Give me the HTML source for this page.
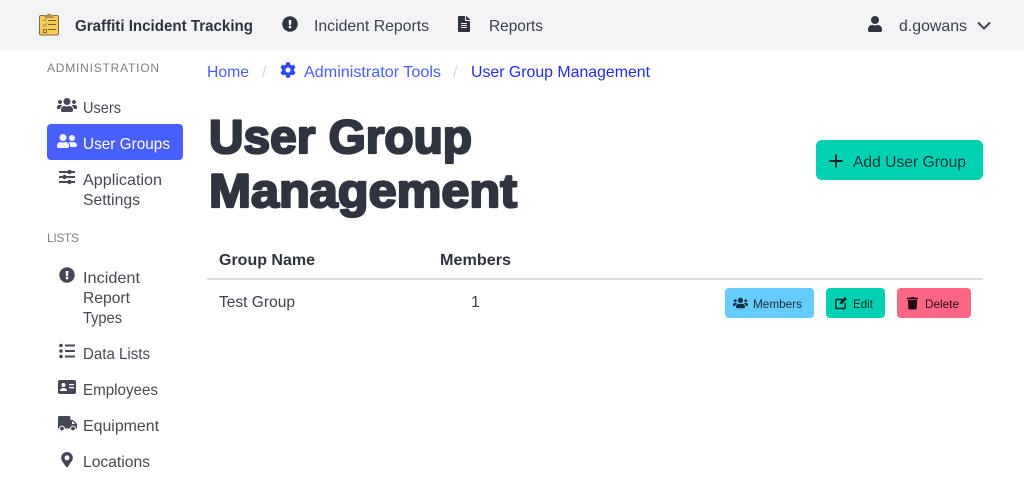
<!DOCTYPE html>
<html lang="en"><head><meta charset="utf-8"><title>User Group Management</title>
<style>
html,body{margin:0;padding:0;background:#fff;width:1024px;height:502px;overflow:hidden}
svg{display:block}
text{font-family:"Liberation Sans",sans-serif;font-size:16px;fill:#454957;white-space:pre}
.n{fill:#3a4050}
.b{font-weight:bold;fill:#2f3440}
.s{font-size:12px;fill:#7d7f85}
.a{fill:#485fff}
.t{font-size:12px;fill:#1e2a30}
</style></head><body>
<svg width="1024" height="502" viewBox="0 0 1024 502" xmlns="http://www.w3.org/2000/svg">
<defs>
<pattern id="d" width="2" height="2" patternUnits="userSpaceOnUse"><rect width="2" height="2" fill="#fafafb"/><rect width="1" height="1" fill="#ebedf0"/><rect x="1" y="1" width="1" height="1" fill="#ebedf0"/></pattern>
<path id="exc" d="M504 256c0 136.997-111.043 248-248 248S8 392.997 8 256C8 119.083 119.043 8 256 8s248 111.083 248 248zm-248 50c-25.405 0-46 20.595-46 46s20.595 46 46 46 46-20.595 46-46-20.595-46-46-46zm-43.673-165.346l7.418 136c.347 6.364 5.609 11.346 11.982 11.346h48.546c6.373 0 11.635-4.982 11.982-11.346l7.418-136c.375-6.874-5.098-12.654-11.982-12.654h-63.383c-6.884 0-12.356 5.78-11.981 12.654z"/>
<path id="usr" d="M96 224c35.300 0 64-28.700 64-64s-28.700-64-64-64-64 28.700-64 64 28.700 64 64 64zm448 0c35.300 0 64-28.700 64-64s-28.700-64-64-64-64 28.700-64 64 28.700 64 64 64zm32 32h-64c-17.600 0-33.500 7.100-45.100 18.600 40.300 22.100 68.900 62 75.100 109.400h66c17.700 0 32-14.300 32-32v-32c0-35.300-28.700-64-64-64zm-256 0c61.900 0 112-50.100 112-112S381.900 32 320 32 208 82.100 208 144s50.100 112 112 112zm76.800 32h-8.300c-20.800 10-43.900 16-68.500 16s-47.600-6-68.500-16h-8.300C179.600 288 128 339.600 128 403.200V432c0 26.500 21.500 48 48 48h288c26.500 0 48-21.500 48-48v-28.800c0-63.600-51.600-115.200-115.200-115.200zm-223.700-13.400C161.500 263.100 145.600 256 128 256H64c-35.300 0-64 28.700-64 64v32c0 17.700 14.300 32 32 32h65.900c6.300-47.400 34.900-87.300 75.200-109.400z"/>
</defs>

<!-- top bar -->
<rect width="1024" height="50" fill="url(#d)"/>
<g>
<rect x="39.500" y="15.500" width="19" height="19.500" rx="1.500" fill="#fdcb57" stroke="#7d6a3c"/>
<path d="M44.500 18v-3h2.300a2.400 2.400 0 0 1 4.400 0h2.300v3z" fill="#b08f4f"/>
<path d="M43 19.500l1.500 1.500 2.500-2.800M43 24.500l1.500 1.500 2.500-2.800" fill="none" stroke="#7fa53f" stroke-width="1"/>
<rect x="43.500" y="29.500" width="3" height="3" fill="none" stroke="#75602f" stroke-width=".9"/>
<path d="M48 20.500h8M48 24.500h8M48 29.500h8" stroke="#75602f" stroke-width=".9"/>
</g>
<text x="75" y="31" class="b" textLength="178" lengthAdjust="spacingAndGlyphs" style="font-size:15.500px">Graffiti Incident Tracking</text>
<svg x="282" y="16" width="16" height="16" viewBox="0 0 512 512" fill="#2f3440"><use href="#exc"/></svg>
<text x="314" y="31" class="n" textLength="115" lengthAdjust="spacingAndGlyphs">Incident Reports</text>
<svg x="458" y="16" width="12" height="16" viewBox="0 0 384 512" fill="#2f3440"><path d="M224 136V0H24C10.700 0 0 10.700 0 24v464c0 13.300 10.700 24 24 24h336c13.300 0 24-10.700 24-24V160H248c-13.200 0-24-10.800-24-24zm64 236c0 6.600-5.400 12-12 12H108c-6.600 0-12-5.400-12-12v-8c0-6.600 5.400-12 12-12h168c6.600 0 12 5.400 12 12v8zm0-64c0 6.600-5.400 12-12 12H108c-6.600 0-12-5.400-12-12v-8c0-6.600 5.400-12 12-12h168c6.600 0 12 5.400 12 12v8zm0-72v8c0 6.600-5.400 12-12 12H108c-6.600 0-12-5.400-12-12v-8c0-6.600 5.400-12 12-12h168c6.600 0 12 5.400 12 12zm96-114.100v6.100H256V0h6.100c6.400 0 12.500 2.500 17 7l97.900 98c4.500 4.500 7 10.600 7 16.900z"/></svg>
<text x="489" y="31" class="n" textLength="54" lengthAdjust="spacingAndGlyphs">Reports</text>
<svg x="868" y="16" width="14" height="16" viewBox="0 0 448 512" fill="#2f3440"><path d="M224 256c70.700 0 128-57.300 128-128S294.700 0 224 0 96 57.300 96 128s57.300 128 128 128zm89.600 32h-16.700c-22.200 10.200-46.900 16-72.900 16s-50.600-5.800-72.900-16h-16.700C60.200 288 0 348.200 0 422.400V464c0 26.500 21.500 48 48 48h352c26.500 0 48-21.500 48-48v-41.600c0-74.200-60.200-134.400-134.400-134.400z"/></svg>
<text x="899" y="31" class="n" textLength="68" lengthAdjust="spacingAndGlyphs">d.gowans</text>
<path d="M978 22.500l6 6 6-6" fill="none" stroke="#3d4354" stroke-width="2"/>

<!-- sidebar -->
<text x="47" y="72" class="s" textLength="112" lengthAdjust="spacing">ADMINISTRATION</text>
<svg x="57" y="97" width="20" height="16" viewBox="0 0 640 512" fill="#454957"><use href="#usr"/></svg>
<text x="83" y="113" textLength="38" lengthAdjust="spacingAndGlyphs">Users</text>
<rect x="47" y="124" width="136" height="36" rx="4" fill="#485fff"/>
<svg x="57" y="133" width="20" height="16" viewBox="0 0 640 512" fill="#f1f3ff"><path d="M192 256c61.900 0 112-50.100 112-112S253.900 32 192 32 80 82.100 80 144s50.100 112 112 112zm76.800 32h-8.300c-20.800 10-43.900 16-68.500 16s-47.600-6-68.500-16h-8.300C51.600 288 0 339.600 0 403.200V432c0 26.500 21.500 48 48 48h288c26.500 0 48-21.500 48-48v-28.800c0-63.600-51.600-115.200-115.200-115.200zM480 256c53 0 96-43 96-96s-43-96-96-96-96 43-96 96 43 96 96 96zm48 32h-3.800c-13.900 4.800-28.600 8-44.200 8s-30.300-3.200-44.200-8H432c-20.400 0-39.200 5.900-55.700 15.400 24.400 26.300 39.700 61.200 39.700 99.800v38.400c0 2.200-.5 4.300-.6 6.400H592c26.500 0 48-21.500 48-48 0-61.900-50.100-112-112-112z"/></svg>
<text x="83" y="149" style="fill:#fff" textLength="87" lengthAdjust="spacingAndGlyphs">User Groups</text>
<g fill="#454957"><rect x="59" y="171" width="16" height="2"/><rect x="59" y="176" width="16" height="2"/><rect x="59" y="181" width="16" height="2"/><circle cx="69.500" cy="172" r="2.200"/><circle cx="64.500" cy="177" r="2.200"/><circle cx="69.500" cy="182" r="2.200"/></g>
<text x="83" y="185" textLength="79" lengthAdjust="spacingAndGlyphs">Application</text>
<text x="83" y="205" textLength="57" lengthAdjust="spacingAndGlyphs">Settings</text>
<text x="47" y="242" class="s" textLength="32" lengthAdjust="spacing">LISTS</text>
<svg x="59" y="267" width="16" height="16" viewBox="0 0 512 512" fill="#454957"><use href="#exc"/></svg>
<text x="83" y="283" textLength="57" lengthAdjust="spacingAndGlyphs">Incident</text>
<text x="83" y="303" textLength="47" lengthAdjust="spacingAndGlyphs">Report</text>
<text x="83" y="323" textLength="39" lengthAdjust="spacingAndGlyphs">Types</text>
<g fill="#454957"><circle cx="61" cy="345.500" r="1.800"/><circle cx="61" cy="351" r="1.800"/><circle cx="61" cy="356.500" r="1.800"/><rect x="65" y="344.500" width="10" height="2" rx=".5"/><rect x="65" y="350" width="10" height="2" rx=".5"/><rect x="65" y="355.500" width="10" height="2" rx=".5"/></g>
<text x="83" y="359" textLength="67" lengthAdjust="spacingAndGlyphs">Data Lists</text>
<rect x="58" y="380" width="18" height="14" rx="2" fill="#454957"/>
<circle cx="63.500" cy="385" r="2" fill="#fff"/><path d="M60 391c0-4 7-4 7 0z" fill="#fff"/><rect x="69" y="384" width="5" height="1.300" fill="#fff"/><rect x="69" y="387" width="5" height="1.300" fill="#fff"/>
<text x="83" y="395" textLength="75" lengthAdjust="spacingAndGlyphs">Employees</text>
<path d="M58 417.500a1.500 1.500 0 0 1 1.500-1.500H69a1.500 1.500 0 0 1 1.500 1.500V420H73l4 4v4.500H58z" fill="#454957"/>
<circle cx="62" cy="428.500" r="2.400" fill="#454957" stroke="#fff"/><circle cx="73" cy="428.500" r="2.400" fill="#454957" stroke="#fff"/><path d="M72 421.500h1l2 2.500h-3z" fill="#fff"/>
<text x="83" y="431" textLength="76" lengthAdjust="spacingAndGlyphs">Equipment</text>
<svg x="61" y="452" width="12" height="15.500" viewBox="0 0 384 512" fill="#454957"><path d="M172.268 501.670C26.970 291.031 0 268.413 0 192 0 85.961 85.961 0 192 0s192 85.961 192 192c0 76.413-26.970 99.031-172.268 309.670-9.535 13.774-29.930 13.773-39.464 0zM192 272c44.183 0 80-35.817 80-80s-35.817-80-80-80-80 35.817-80 80 35.817 80 80 80z"/></svg>
<text x="83" y="467" textLength="67" lengthAdjust="spacingAndGlyphs">Locations</text>

<!-- breadcrumb -->
<text x="207" y="77" class="a" textLength="42" lengthAdjust="spacingAndGlyphs">Home</text>
<text x="262" y="77" style="fill:#d4d7dc">/</text>
<svg x="280" y="62" width="16" height="16" viewBox="0 0 512 512" fill="#2e48f5"><path d="M487.400 315.700l-42.600-24.600c4.300-23.200 4.300-47 0-70.200l42.600-24.600c4.900-2.800 7.100-8.600 5.500-14-11.100-35.600-30-67.800-54.700-94.600-3.800-4.100-10-5.100-14.800-2.300L380.800 110c-17.900-15.400-38.500-27.300-60.800-35.100V25.800c0-5.600-3.900-10.500-9.400-11.700-36.700-8.200-74.300-7.800-109.200 0-5.500 1.200-9.400 6.100-9.400 11.700V75c-22.200 7.900-42.800 19.800-60.800 35.100L88.700 85.500c-4.900-2.800-11-1.900-14.800 2.300-24.700 26.700-43.600 58.900-54.700 94.600-1.700 5.400.6 11.200 5.500 14L67.300 221c-4.300 23.200-4.300 47 0 70.200l-42.600 24.600c-4.900 2.800-7.100 8.600-5.500 14 11.100 35.600 30 67.800 54.700 94.600 3.800 4.100 10 5.100 14.800 2.300l42.600-24.600c17.900 15.400 38.500 27.300 60.800 35.100v49.200c0 5.600 3.900 10.500 9.400 11.700 36.700 8.200 74.300 7.800 109.200 0 5.500-1.200 9.400-6.100 9.400-11.700v-49.200c22.200-7.900 42.800-19.800 60.800-35.100l42.600 24.600c4.900 2.800 11 1.900 14.800-2.300 24.700-26.700 43.600-58.900 54.700-94.600 1.500-5.500-.7-11.300-5.600-14.100zM256 336c-44.100 0-80-35.900-80-80s35.900-80 80-80 80 35.900 80 80-35.900 80-80 80z"/></svg>
<text x="304" y="77" class="a" textLength="137" lengthAdjust="spacingAndGlyphs">Administrator Tools</text>
<text x="453" y="77" style="fill:#d4d7dc">/</text>
<text x="471" y="77" style="fill:#1f2df0" textLength="179" lengthAdjust="spacingAndGlyphs">User Group Management</text>

<!-- heading -->
<text x="209" y="153" textLength="263" lengthAdjust="spacingAndGlyphs" style="font-size:47px;font-weight:bold;fill:#2f3440;stroke:#2f3440;stroke-width:2.300px;stroke-linejoin:round">User Group</text>
<text x="209" y="207" textLength="308" lengthAdjust="spacingAndGlyphs" style="font-size:47px;font-weight:bold;fill:#2f3440;stroke:#2f3440;stroke-width:2.300px;stroke-linejoin:round">Management</text>

<!-- add button -->
<rect x="816" y="140" width="167" height="40" rx="6" fill="#00d1b2"/>
<path d="M836 154.500v13M829.500 161h13" stroke="#0c2623" stroke-width="2"/>
<text x="853" y="167" style="fill:#0f3a38" textLength="113" lengthAdjust="spacingAndGlyphs">Add User Group</text>

<!-- table -->
<text x="219" y="265" class="b" textLength="96" lengthAdjust="spacingAndGlyphs">Group Name</text>
<text x="440" y="265" class="b" textLength="71" lengthAdjust="spacingAndGlyphs">Members</text>
<rect x="207" y="278" width="776" height="2" fill="#d9dbdf"/>
<text x="219" y="307" style="fill:#3d4150" textLength="76" lengthAdjust="spacingAndGlyphs">Test Group</text>
<text x="471" y="307" style="fill:#3d4150">1</text>

<rect x="725" y="288" width="89" height="30" rx="4" fill="#66ccff"/>
<svg x="733" y="297" width="15" height="12" viewBox="0 0 640 512" fill="#12303f"><use href="#usr"/></svg>
<text x="753" y="308" class="t" textLength="49" lengthAdjust="spacingAndGlyphs">Members</text>
<rect x="826" y="288" width="59" height="30" rx="4" fill="#00d1b2"/>
<path d="M843 299.500H837a1.200 1.200 0 0 0-1.200 1.200v6.600a1.200 1.200 0 0 0 1.200 1.200h7a1.200 1.200 0 0 0 1.200-1.200V303" fill="none" stroke="#0c2a27" stroke-width="1.500"/>
<path d="M840 302l5-5 2 2-5 5h-2.300z" fill="#0c2a27"/>
<text x="853" y="308" class="t" style="fill:#0c2a27" textLength="20" lengthAdjust="spacingAndGlyphs">Edit</text>
<rect x="897" y="288" width="74" height="30" rx="4" fill="#ff6685"/>
<svg x="907" y="297" width="11" height="12.500" viewBox="0 0 448 512" fill="#220510"><path d="M432 32H312l-9.400-18.700A24 24 0 0 0 281.100 0H166.800a23.720 23.720 0 0 0-21.400 13.300L136 32H16A16 16 0 0 0 0 48v32a16 16 0 0 0 16 16h416a16 16 0 0 0 16-16V48a16 16 0 0 0-16-16zM53.200 467a48 48 0 0 0 47.900 45h245.800a48 48 0 0 0 47.900-45L416 128H32z"/></svg>
<text x="925" y="308" class="t" style="fill:#2a0a14" textLength="34" lengthAdjust="spacingAndGlyphs">Delete</text>
</svg>
</body></html>
